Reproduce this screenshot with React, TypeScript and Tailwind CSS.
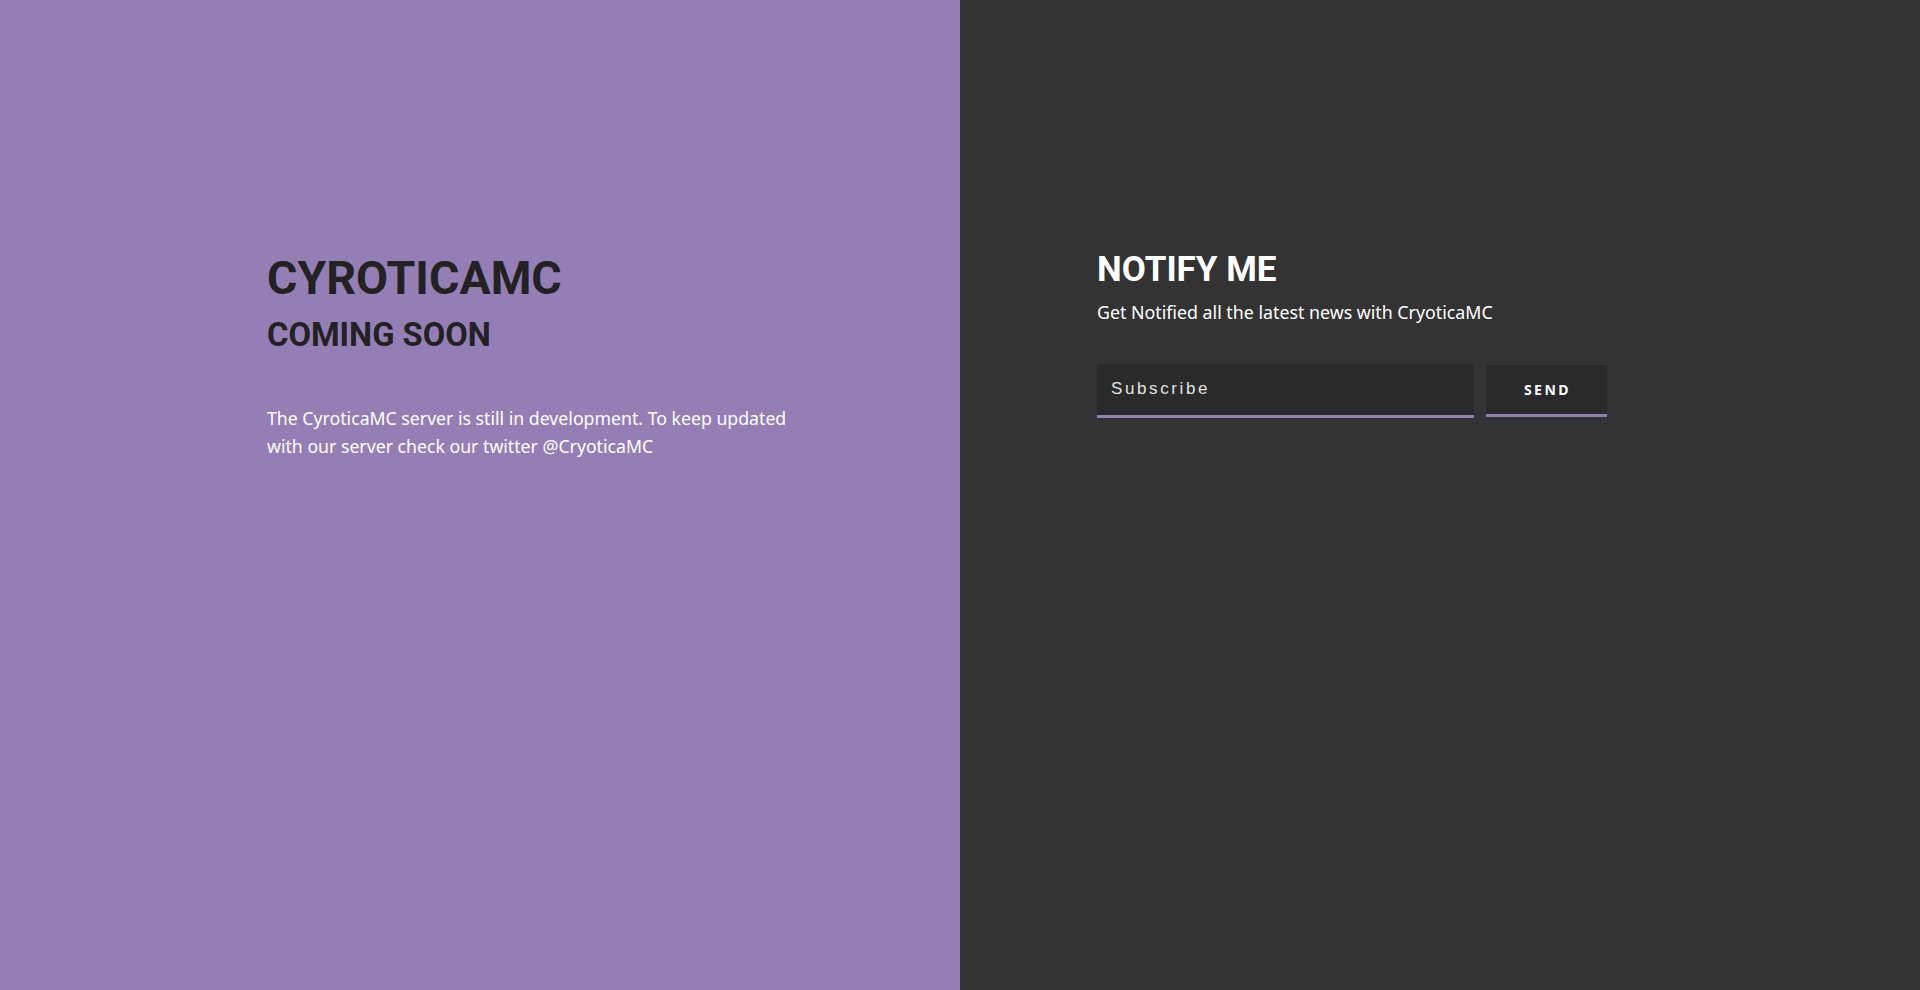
export default function App() {
    return (
        <div className="flex h-[990px] w-full">
            <div className="w-1/2 bg-[#937fb5] pl-[267px] pt-[251px]">
                <h1 className="font-['Roboto',sans-serif] text-[46.5px] font-bold leading-[54px] text-[#222]">CYROTICAMC</h1>
                <h2 className="mt-[11px] font-['Roboto',sans-serif] text-[32.7px] font-bold leading-[38px] text-[#222]">COMING SOON</h2>
                <p className="mt-[50px] max-w-[540px] font-['Noto_Sans',sans-serif] text-[17.7px] leading-[28px] text-white">
                    The CyroticaMC server is still in development. To keep updated with our server check our twitter @CryoticaMC
                </p>
            </div>
            <div className="w-1/2 bg-[#333333] pl-[137px] pt-[249px]">
                <h2 className="font-['Roboto',sans-serif] text-[35px] font-bold leading-[41px] text-white">NOTIFY ME</h2>
                <p className="mt-[8px] font-['Noto_Sans',sans-serif] text-[17.8px] leading-[28px] text-white">
                    Get Notified all the latest news with CryoticaMC
                </p>
                <form className="mt-[38px] flex items-start gap-[12px]" onSubmit={(e) => e.preventDefault()}>
                    <input
                        type="text"
                        placeholder="Subscribe"
                        className="h-[54px] w-[377px] border-b-[3px] border-[#937fb5] bg-[#2a2a2a] px-[14px] pb-[1px] font-['Liberation_Sans',sans-serif] text-[17px] tracking-[2.6px] text-white placeholder:text-[#e2e2e2] outline-none"
                    />
                    <button
                        type="submit"
                        className="mt-[1px] h-[52px] w-[121px] border-b-[3px] border-[#937fb5] bg-[#2a2a2a] pl-[2px] font-['Noto_Sans',sans-serif] text-[14px] font-bold tracking-[2.5px] text-white"
                    >
                        SEND
                    </button>
                </form>
            </div>
        </div>
    );
}
